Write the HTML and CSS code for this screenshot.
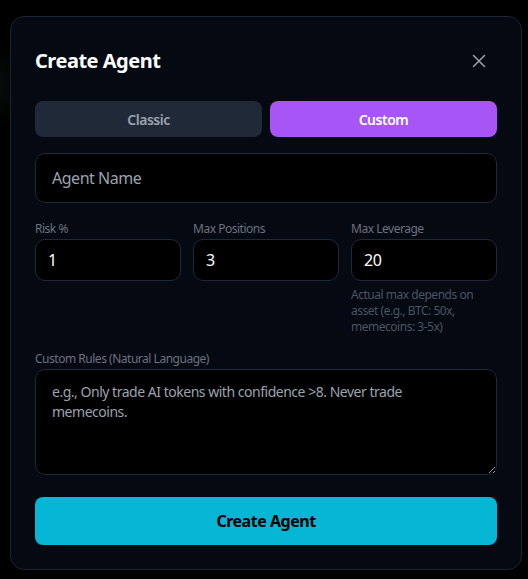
FILE: index.html
```html
<!DOCTYPE html>
<html lang="en">
<head>
<meta charset="utf-8">
<title>Create Agent</title>
<link rel="stylesheet" href="styles.css">
</head>
<body>
<div class="backdrop">
  <div class="modal">
    <div class="modal-header">
      <h2 class="modal-title">Create Agent</h2>
      <button class="close-btn" aria-label="Close">
        <svg width="14" height="14" viewBox="0 0 14 14"><path d="M1.5 1.5 L12.5 12.5 M12.5 1.5 L1.5 12.5" stroke="currentColor" stroke-width="1.5" stroke-linecap="round" fill="none"/></svg>
      </button>
    </div>
    <div class="tabs">
      <button class="tab">Classic</button>
      <button class="tab tab-active">Custom</button>
    </div>
    <input class="field field-lg" type="text" placeholder="Agent Name">
    <div class="grid3">
      <div class="col">
        <label class="label">Risk %</label>
        <input class="field field-sm" type="text" value="1">
      </div>
      <div class="col">
        <label class="label">Max Positions</label>
        <input class="field field-sm" type="text" value="3">
      </div>
      <div class="col">
        <label class="label">Max Leverage</label>
        <input class="field field-sm" type="text" value="20">
        <p class="hint">Actual max depends on asset (e.g., BTC: 50x, memecoins: 3-5x)</p>
      </div>
    </div>
    <div class="col rules">
      <label class="label">Custom Rules (Natural Language)</label>
      <textarea class="field textarea" rows="4" placeholder="e.g., Only trade AI tokens with confidence >8. Never trade memecoins."></textarea>
    </div>
    <button class="submit">Create Agent</button>
  </div>
</div>
</body>
</html>
```

FILE: styles.css
```css
* { box-sizing: border-box; }
html, body {
  margin: 0;
  padding: 0;
  background: #000;
  height: 100%;
}
body {
  font-family: "Noto Sans", "Open Sans", sans-serif;
  letter-spacing: -0.03em;
  color: #fff;
}
.backdrop {
  min-height: 100%;
  padding: 16px 0 0 10px;
  background:
    radial-gradient(ellipse 40px 60px at 0px 85px, rgba(20,60,50,0.22), transparent 70%),
    #000;
}
.modal {
  width: 512px;
  background: #050912;
  border: 1px solid #1c2431;
  border-radius: 14px;
  padding: 24px;
  display: flex;
  flex-direction: column;
}
.modal-header {
  display: flex;
  align-items: center;
  justify-content: space-between;
  height: 38px;
  padding-top: 2px;
  margin-bottom: 22px;
}
.modal-title {
  margin: 0;
  font-size: 20px;
  font-weight: 700;
  line-height: 28px;
  color: #fff;
}
.close-btn {
  background: none;
  border: none;
  padding: 0;
  margin-right: 11px;
  color: #9ca3af;
  display: flex;
  cursor: pointer;
}
.tabs {
  display: grid;
  grid-template-columns: 1fr 1fr;
  gap: 8px;
  margin-bottom: 16px;
}
.tab {
  height: 36px;
  border: none;
  border-radius: 8px;
  background: #1f2937;
  color: #9ca3af;
  font-family: inherit;
  letter-spacing: inherit;
  font-size: 14px;
  font-weight: 600;
}
.tab-active {
  background: #a855f7;
  color: #fff;
}
.field {
  display: block;
  width: 100%;
  background: #000;
  border: 1px solid #1f2937;
  border-radius: 10px;
  color: #fff;
  font-family: inherit;
  letter-spacing: inherit;
  outline: none;
}
.field::placeholder { color: #9ca3af; }
.field-lg {
  height: 50px;
  padding: 12px 16px;
  font-size: 16px;
  line-height: 24px;
}
.grid3 {
  display: grid;
  grid-template-columns: repeat(3, 1fr);
  gap: 12px;
  margin-top: 16px;
}
.col {
  display: flex;
  flex-direction: column;
}
.label {
  font-size: 12px;
  line-height: 20px;
  color: #6b7280;
}
.field-sm {
  height: 42px;
  padding: 8px 12px;
  font-size: 16px;
  line-height: 24px;
}
.hint {
  margin: 6px 0 0;
  font-size: 12px;
  line-height: 16px;
  color: #4b5563;
}
.rules {
  margin-top: 14px;
}
.textarea {
  height: 106px;
  padding: 12px 16px;
  font-size: 14px;
  line-height: 20px;
  resize: vertical;
}
.submit {
  margin-top: 22px;
  height: 48px;
  border: none;
  border-radius: 8px;
  background: #06b6d4;
  color: #000;
  font-family: inherit;
  letter-spacing: inherit;
  font-size: 16px;
  font-weight: 700;
}
```
